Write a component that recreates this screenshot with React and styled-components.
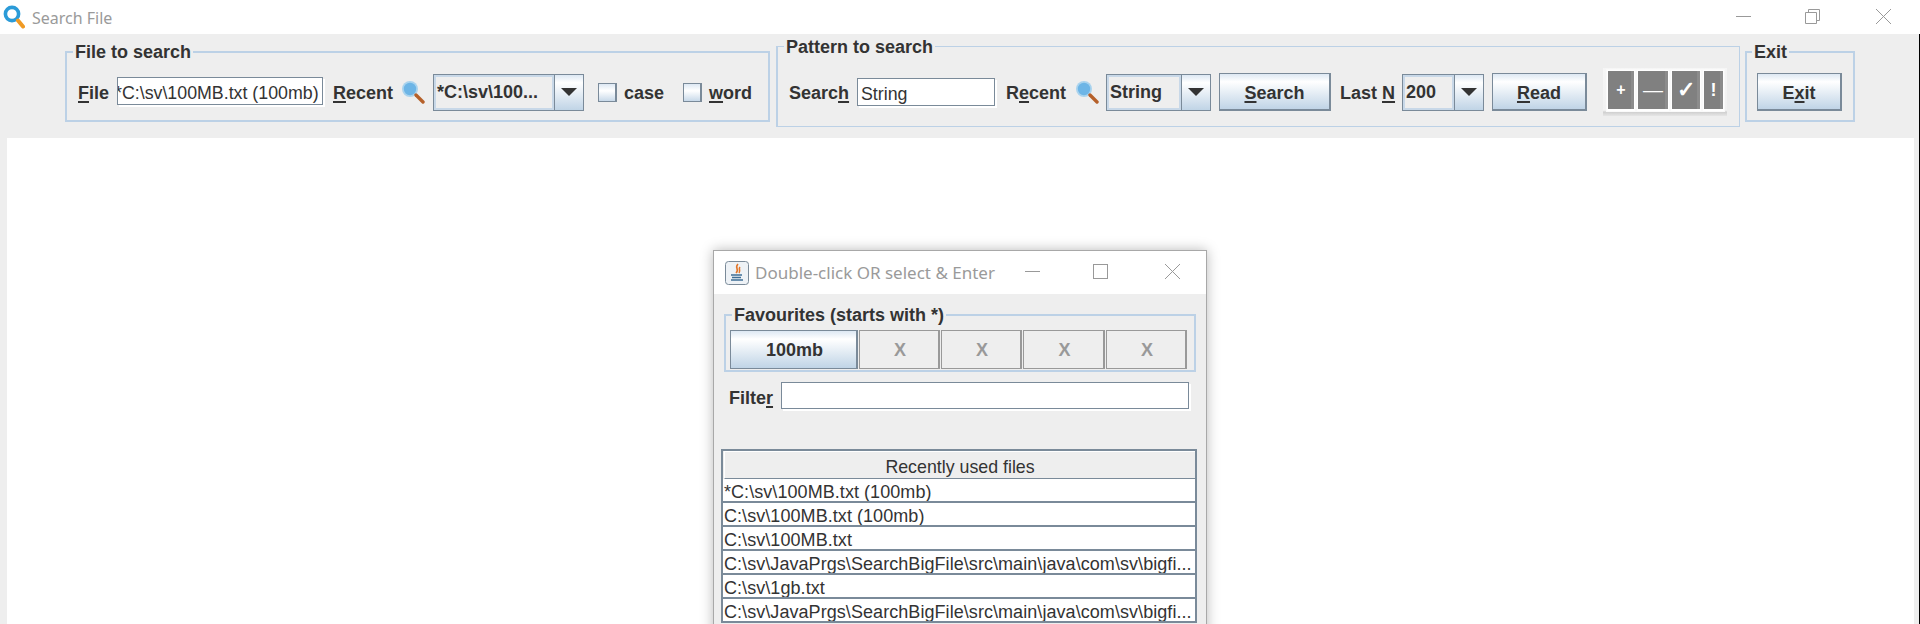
import React from "react";
import styled, { createGlobalStyle } from "styled-components";

const GlobalStyle = createGlobalStyle`
  html, body {
    margin: 0;
    padding: 0;
    background: #fff;
    overflow: hidden;
  }
  body {
    font-family: "Liberation Sans", Arial, sans-serif;
    color: #333;
  }
`;

const metal = "linear-gradient(#dde8f3 0%, #ffffff 22%, #c0d4e6 100%)";
const plainFont = "17.8px";
const boldFont = "18px";

const Page = styled.div`
  position: relative;
  width: 1920px;
  height: 624px;
  overflow: hidden;
  display: flex;
  flex-direction: column;
`;

const TitleBar = styled.div`
  height: 34px;
  display: flex;
  align-items: center;
  padding-left: 3px;
  background: #fff;
  flex: none;
`;

const TitleText = styled.span`
  font-family: "Noto Sans", sans-serif;
  font-size: ${(p) => p.$size || 16}px;
  color: #9a9a9a;
  margin-left: ${(p) => p.$ml || 7}px;
  padding-top: ${(p) => p.$pt ?? 2}px;
  white-space: nowrap;
`;

const WindowControls = styled.div`
  margin-left: auto;
  display: flex;
  align-items: center;
  height: 100%;
`;

const WindowButton = styled.div`
  width: ${(p) => p.$w || 70}px;
  display: flex;
  justify-content: center;
  align-items: center;
  padding-bottom: ${(p) => p.$pb || 2}px;
  box-sizing: border-box;
`;

const Workspace = styled.div`
  flex: 1;
  display: flex;
  flex-direction: column;
  background: #eeeeee;
  border-right: 1px solid #000;
`;

const Toolbar = styled.div`
  height: 104px;
  flex: none;
  display: flex;
  align-items: flex-start;
  padding-left: 65px;
`;

const Panel = styled.div`
  position: relative;
  box-sizing: border-box;
  flex: none;
  display: flex;
  align-items: center;
  width: ${(p) => p.$w}px;
  height: ${(p) => p.$h}px;
  margin-top: ${(p) => p.$mt}px;
  margin-left: ${(p) => p.$ml || 0}px;
  padding: ${(p) => p.$pad || "11px 0 0 11px"};
  border: 2px solid #bcd1e6;
  border-width: ${(p) => p.$bw || "2px"};
`;

const PanelTitle = styled.span`
  position: absolute;
  left: ${(p) => p.$left ?? 6}px;
  top: ${(p) => p.$top ?? -10}px;
  padding: 0 2px;
  background: #eeeeee;
  font-size: ${boldFont};
  line-height: 18px;
  font-weight: bold;
  color: #333;
  white-space: nowrap;
`;

const Label = styled.span`
  flex: none;
  width: ${(p) => p.$w}px;
  margin-left: ${(p) => p.$ml || 0}px;
  font-size: ${boldFont};
  font-weight: bold;
  color: #333;
  white-space: nowrap;
  padding-top: ${(p) => p.$pt ?? 2}px;
  u {
    text-decoration-thickness: 2px;
    text-underline-offset: 2px;
  }
`;

const TextInput = styled.div`
  flex: none;
  box-sizing: border-box;
  width: ${(p) => p.$w}px;
  height: ${(p) => p.$h || 28}px;
  margin-left: ${(p) => p.$ml || 0}px;
  margin-bottom: ${(p) => p.$mb ?? 3}px;
  background: #fff;
  border: 1px solid #7a8a99;
  box-shadow: 2px 2px 0 #fff;
  font-size: ${plainFont};
  line-height: 30px;
  color: #333;
  overflow: hidden;
  white-space: nowrap;
  text-indent: ${(p) => p.$indent || 0}px;
  padding-left: ${(p) => p.$pl || 0}px;
`;

const SearchIcon = styled.svg`
  flex: none;
  width: 24px;
  height: 24px;
  margin-left: ${(p) => p.$ml || 0}px;
  filter: blur(0.4px);
`;

const Combo = styled.div`
  flex: none;
  box-sizing: border-box;
  display: flex;
  width: ${(p) => p.$w}px;
  height: 37px;
  margin-left: ${(p) => p.$ml || 0}px;
  border: 1px solid #7a8a99;
`;

const ComboValue = styled.div`
  flex: 1;
  box-sizing: border-box;
  min-width: 0;
  border: 2px solid #c8d8e8;
  padding-left: 1px;
  font-size: ${boldFont};
  font-weight: bold;
  line-height: 30px;
  color: #333;
  white-space: nowrap;
  overflow: hidden;
`;

const ComboArrow = styled.div`
  flex: none;
  width: 29px;
  box-sizing: border-box;
  background: ${metal};
  border-left: 1px solid #7a8a99;
  display: flex;
  justify-content: center;
  padding-top: 13px;
  &::after {
    content: "";
    width: 0;
    height: 0;
    border-left: 8px solid transparent;
    border-right: 8px solid transparent;
    border-top: 8px solid #333;
  }
`;

const Checkbox = styled.div`
  flex: none;
  box-sizing: border-box;
  width: 19px;
  height: 19px;
  margin-left: ${(p) => p.$ml || 0}px;
  border: 1px solid #7a8a99;
  border-right-width: 2px;
  background: linear-gradient(#dde8f3, #ffffff 40%, #c8d9e9);
`;

const Button = styled.div`
  flex: none;
  box-sizing: border-box;
  width: ${(p) => p.$w}px;
  height: ${(p) => p.$h || 38}px;
  margin-left: ${(p) => p.$ml || 0}px;
  padding-top: 3px;
  border: 1px solid #7a8a99;
  border-right-width: 2px;
  border-bottom-width: 2px;
  background: ${metal};
  display: flex;
  align-items: center;
  justify-content: center;
  font-size: ${boldFont};
  font-weight: bold;
  color: #333;
  u {
    text-decoration-thickness: 2px;
    text-underline-offset: 2px;
  }
`;

const ActionGroup = styled.div`
  flex: none;
  box-sizing: border-box;
  display: flex;
  gap: 2px;
  width: 124px;
  height: 48px;
  margin-left: ${(p) => p.$ml || 0}px;
  padding: 2px 3px 4px 4px;
  background: linear-gradient(#f6f6f6, #f2f2f2 88%, #d0d0d0 92%, #e6e6e6);
`;

const ActionButton = styled.div`
  box-sizing: border-box;
  width: ${(p) => p.$w}px;
  height: 41px;
  background: #808080;
  border: 1px solid #fff;
  border-bottom-width: 2px;
  outline: 1px solid #fafafa;
  box-shadow: inset -3px 0 0 #8c8c8c;
  color: #fff;
  font-size: ${(p) => p.$size || 16}px;
  font-weight: ${(p) => p.$weight || "bold"};
  display: flex;
  align-items: center;
  justify-content: center;
`;

const MainArea = styled.div`
  flex: 1;
  background: #fff;
  margin: 0 5px 0 7px;
`;

const Dialog = styled.div`
  position: absolute;
  left: 713px;
  top: 250px;
  width: 494px;
  height: 390px;
  box-sizing: border-box;
  border: 1px solid #a8a8a8;
  background: #eeeeee;
  box-shadow: 0 0 12px rgba(0, 0, 0, 0.28);
`;

const DialogTitle = styled.div`
  height: 43px;
  background: #fff;
  display: flex;
  align-items: center;
  padding-left: 11px;
`;

const FavButtons = styled.div`
  display: flex;
  gap: 1px;
`;

const FavButton = styled.div`
  box-sizing: border-box;
  width: ${(p) => p.$w || 81}px;
  height: 39px;
  padding: 2px 0 0 2px;
  display: flex;
  align-items: center;
  justify-content: center;
  font-size: ${boldFont};
  font-weight: bold;
  color: ${(p) => (p.$active ? "#333" : "#999")};
  border: 1px solid ${(p) => (p.$active ? "#7a8a99" : "#999")};
  border-right-width: 2px;
  background: ${(p) => (p.$active ? metal : "#eeeeee")};
`;

const FilterRow = styled.div`
  display: flex;
  align-items: center;
  margin: 10px 0 0 15px;
`;

const RecentTable = styled.div`
  box-sizing: border-box;
  width: 476px;
  margin: 40px 0 0 7px;
  border: 2px solid #7a8a99;
  border-bottom: none;
`;

const TableHeader = styled.div`
  height: 28px;
  box-sizing: border-box;
  margin-left: 1px;
  padding-top: 5px;
  border-top: 1px solid #fff;
  border-left: 1px solid #fff;
  border-bottom: 1px solid #7a8a99;
  text-align: center;
  font-size: ${plainFont};
  line-height: 20px;
  color: #333;
`;

const TableRow = styled.div`
  height: 24px;
  box-sizing: border-box;
  background: #fff;
  border-bottom: 2px solid #7a8a99;
  padding-left: 1px;
  font-size: 18px;
  letter-spacing: 0.06px;
  line-height: 26px;
  color: #333;
  white-space: nowrap;
  overflow: hidden;
`;

const SmallMagnifier = ({ ml }) => (
  <SearchIcon $ml={ml} viewBox="0 0 24 24">
    <circle cx="8" cy="9" r="8" fill="#a9d3ee" />
    <circle cx="8" cy="9" r="6.2" fill="#6db5e6" />
    <path d="M14 15 L21 22" stroke="#b5602a" strokeWidth="3.4" strokeLinecap="round" />
  </SearchIcon>
);

const recentFiles = [
  "*C:\\sv\\100MB.txt (100mb)",
  "C:\\sv\\100MB.txt (100mb)",
  "C:\\sv\\100MB.txt",
  "C:\\sv\\JavaPrgs\\SearchBigFile\\src\\main\\java\\com\\sv\\bigfi...",
  "C:\\sv\\1gb.txt",
  "C:\\sv\\JavaPrgs\\SearchBigFile\\src\\main\\java\\com\\sv\\bigfi...",
];

export default function App() {
  return (
    <Page>
      <GlobalStyle />
      <TitleBar>
        <svg width="22" height="24" viewBox="0 0 22 24">
          <circle cx="9" cy="9" r="6.6" fill="#fff" stroke="#2b9bd8" strokeWidth="3.6" />
          <path d="M15 15.5 L20 21.5" stroke="#f09a24" strokeWidth="4" strokeLinecap="round" />
        </svg>
        <TitleText>Search File</TitleText>
        <WindowControls>
          <WindowButton $w={69}>
            <svg width="15" height="15" viewBox="0 0 15 15">
              <path d="M0 7.5 H15" stroke="#999" />
            </svg>
          </WindowButton>
          <WindowButton $w={69}>
            <svg width="15" height="15" viewBox="0 0 15 15">
              <path d="M.5 3.5 H11.5 V14.5 H.5 Z M3.5 3.5 V.5 H14.5 V11.5 H11.5" fill="none" stroke="#999" />
            </svg>
          </WindowButton>
          <WindowButton $w={73}>
            <svg width="15" height="15" viewBox="0 0 15 15">
              <path d="M0 0 L15 15 M15 0 L0 15" stroke="#999" />
            </svg>
          </WindowButton>
        </WindowControls>
      </TitleBar>

      <Workspace>
        <Toolbar>
          <Panel $w={705} $h={71} $mt={17}>
            <PanelTitle>File to search</PanelTitle>
            <Label $w={39}>
              <u>F</u>ile
            </Label>
            <TextInput $w={206} $indent={-3}>
              *C:\sv\100MB.txt (100mb)
            </TextInput>
            <Label $w={69} $ml={10}>
              <u>R</u>ecent
            </Label>
            <SmallMagnifier />
            <Combo $w={151} $ml={7}>
              <ComboValue>*C:\sv\100...</ComboValue>
              <ComboArrow />
            </Combo>
            <Checkbox $ml={14} />
            <Label $w={52} $ml={7}>case</Label>
            <Checkbox $ml={7} />
            <Label $w={44} $ml={7}>
              <u>w</u>ord
            </Label>
          </Panel>

          <Panel $w={964} $h={81} $mt={12} $ml={6} $bw="1px 1px 1px 2px">
            <PanelTitle $top={-9}>Pattern to search</PanelTitle>
            <Label $w={68}>
              Searc<u>h</u>
            </Label>
            <TextInput $w={138} $pl={3} $mb={1}>String</TextInput>
            <Label $w={70} $ml={11}>
              R<u>e</u>cent
            </Label>
            <SmallMagnifier />
            <Combo $w={105} $ml={6}>
              <ComboValue>String</ComboValue>
              <ComboArrow />
            </Combo>
            <Button $w={112} $ml={8}>
              <u>S</u>earch
            </Button>
            <Label $w={62} $ml={9}>
              Last <u>N</u>
            </Label>
            <Combo $w={82}>
              <ComboValue>200</ComboValue>
              <ComboArrow />
            </Combo>
            <Button $w={95} $ml={8}>
              <u>R</u>ead
            </Button>
            <ActionGroup $ml={16}>
              <ActionButton $w={28}>+</ActionButton>
              <ActionButton $w={32} $size={20} $weight="normal">—</ActionButton>
              <ActionButton $w={30} $size={22}>✓</ActionButton>
              <ActionButton $w={21} $size={18}>!</ActionButton>
            </ActionGroup>
          </Panel>

          <Panel $w={110} $h={71} $mt={17} $ml={5} $pad="11px 0 0 10px">
            <PanelTitle $left={5}>Exit</PanelTitle>
            <Button $w={85}>
              E<u>x</u>it
            </Button>
          </Panel>
        </Toolbar>
        <MainArea />
      </Workspace>

      <Dialog>
        <DialogTitle>
          <svg width="24" height="24" viewBox="0 0 24 24">
            <rect x=".5" y=".5" width="23" height="23" rx="3" fill="#eef2f6" stroke="#7a8a99" />
            <path d="M13 3 C9 7 15 8 11 12 M15 6 C13 8 16 9 14 12" fill="none" stroke="#e2762a" strokeWidth="1.6" />
            <path d="M6 14 H17 M7 16.5 H16 M6 19 H18" stroke="#3f6f96" strokeWidth="1.5" />
          </svg>
          <TitleText $ml={6} $size={17} $pt={0}>Double-click OR select &amp; Enter</TitleText>
          <WindowControls>
            <WindowButton $w={62} $pb={3}>
              <svg width="15" height="15" viewBox="0 0 15 15">
                <path d="M0 7.5 H15" stroke="#999" />
              </svg>
            </WindowButton>
            <WindowButton $w={75} $pb={3}>
              <svg width="15" height="15" viewBox="0 0 15 15">
                <rect x=".5" y=".5" width="14" height="14" fill="none" stroke="#999" />
              </svg>
            </WindowButton>
            <WindowButton $w={68} $pb={3}>
              <svg width="15" height="15" viewBox="0 0 15 15">
                <path d="M0 0 L15 15 M15 0 L0 15" stroke="#999" />
              </svg>
            </WindowButton>
          </WindowControls>
        </DialogTitle>

        <Panel $w={472} $h={58} $mt={20} $ml={10} $pad="12px 0 0 4px">
          <PanelTitle>Favourites (starts with *)</PanelTitle>
          <FavButtons>
            <FavButton $w={128} $active>100mb</FavButton>
            <FavButton>X</FavButton>
            <FavButton>X</FavButton>
            <FavButton $w={82}>X</FavButton>
            <FavButton>X</FavButton>
          </FavButtons>
        </Panel>

        <FilterRow>
          <Label $w={52} $pt={6}>
            Filte<u>r</u>
          </Label>
          <TextInput $w={408} $h={27} $mb={0} />
        </FilterRow>

        <RecentTable>
          <TableHeader>Recently used files</TableHeader>
          {recentFiles.map((file, i) => (
            <TableRow key={i}>{file}</TableRow>
          ))}
        </RecentTable>
      </Dialog>
    </Page>
  );
}
